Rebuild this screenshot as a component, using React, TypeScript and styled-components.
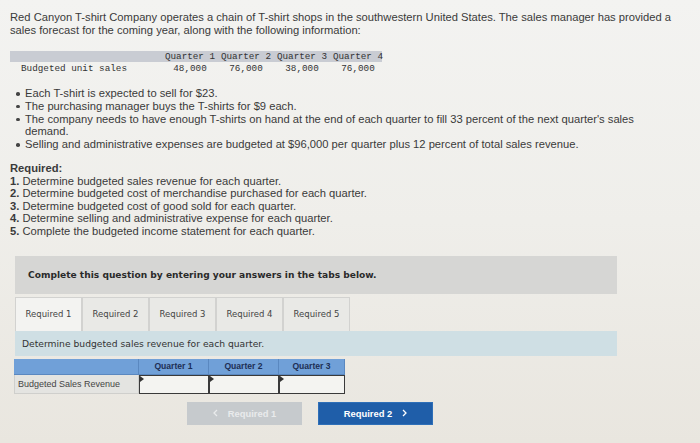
import React from "react";
import styled, { createGlobalStyle } from "styled-components";

const Global = createGlobalStyle`
  html, body { margin: 0; padding: 0; }
  body {
    width: 700px;
    height: 443px;
    overflow: hidden;
    background: linear-gradient(180deg, #f3f3f1 0%, #efeeea 50%, #e9e6df 100%);
    color: #333;
    font-family: "Liberation Sans", Arial, sans-serif;
  }
`;

const Page = styled.div`
  padding: 11px 0 0 10px;
  width: 670px;
`;

const Intro = styled.p`
  margin: 0;
  font-size: 11.2px;
  line-height: 13px;
  color: #3a3a3a;
`;

const DataTable = styled.div`
  margin-top: 14px;
  width: 372px;
  font-family: "Liberation Mono", "DejaVu Sans Mono", monospace;
  font-size: 9.3px;
  color: #333;
`;

const DataRow = styled.div<{ $head?: boolean }>`
  display: grid;
  grid-template-columns: 152px repeat(4, 56px);
  height: 11px;
  line-height: 11px;
  background: ${(p) => (p.$head ? "#c9ccd3" : "transparent")};
  margin-bottom: ${(p) => (p.$head ? "1px" : "0")};
`;

const DataLabel = styled.span`
  padding-left: 11px;
`;

const DataCell = styled.span`
  text-align: center;
  white-space: pre;
`;

const Bullets = styled.ul`
  list-style: none;
  margin: 13px 0 0 0;
  padding: 0 0 0 15px;
  font-size: 11.2px;
  line-height: 12.8px;
  color: #3a3a3a;
`;

const Bullet = styled.li`
  position: relative;
  &::before {
    content: "";
    position: absolute;
    left: -9px;
    top: 5px;
    width: 3.5px;
    height: 3.5px;
    border-radius: 50%;
    background: #444;
  }
`;

const RequiredBlock = styled.div`
  margin-top: 11px;
  font-size: 11.2px;
  line-height: 12.6px;
  color: #3a3a3a;
`;

const Heading = styled.div`
  font-weight: bold;
`;

const Num = styled.b`
  font-weight: bold;
`;

const Instruct = styled.div`
  margin: 18px 0 0 5px;
  width: 602px;
  height: 38px;
  background: #d6d6d4;
  display: flex;
  align-items: center;
  padding-left: 13px;
  box-sizing: border-box;
  font-family: "DejaVu Sans", Verdana, sans-serif;
  font-weight: bold;
  font-size: 9.1px;
  color: #2a2a2a;
`;

const Tabs = styled.div`
  margin: 3px 0 0 5px;
  display: flex;
  height: 34px;
`;

const Tab = styled.div<{ $active?: boolean }>`
  width: 67px;
  box-sizing: border-box;
  border: 1px solid #d2d2d0;
  border-bottom: none;
  background: ${(p) => (p.$active ? "#f3f3f1" : "#e9e9e6")};
  display: flex;
  align-items: center;
  justify-content: center;
  font-family: "DejaVu Sans", Verdana, sans-serif;
  font-size: 8.5px;
  color: #444;
  padding-bottom: 1px;
`;

const Panel = styled.div`
  margin-left: 5px;
  width: 602px;
  height: 25px;
  background: #cfdfe4;
  display: flex;
  align-items: center;
  padding-left: 7px;
  box-sizing: border-box;
  font-family: "DejaVu Sans", Verdana, sans-serif;
  font-size: 9.2px;
  color: #333;
`;

const AnswerTable = styled.div`
  margin: 3px 0 0 4px;
  width: 331px;
  display: grid;
  grid-template-columns: 125px 70px 70px 66px;
  grid-template-rows: 16px 19px;
  font-family: "Liberation Sans", Arial, sans-serif;
`;

const HeadCell = styled.div`
  background: #70a0d8;
  border-right: 1px solid #5a88c0;
  border-bottom: 1px solid #5a88c0;
  display: flex;
  align-items: center;
  justify-content: center;
  font-size: 8.6px;
  font-weight: bold;
  color: #1d2f55;
`;

const RowLabel = styled.div`
  background: #e4e4e1;
  border: 1px solid #cfcfcc;
  border-top: none;
  display: flex;
  align-items: center;
  padding-left: 3px;
  font-size: 9px;
  color: #444;
`;

const InputCell = styled.div`
  position: relative;
  background: #f4f4f1;
  border: 1px solid #3a3a3a;
  &::before {
    content: "";
    position: absolute;
    left: 0;
    top: 0;
    border-top: 3px solid transparent;
    border-bottom: 3px solid transparent;
    border-left: 4px solid #333;
  }
`;

const Buttons = styled.div`
  margin: 8px 0 0 177px;
  display: flex;
  gap: 16px;
`;

const NavButton = styled.div<{ $primary?: boolean }>`
  width: 115px;
  height: 23px;
  box-sizing: border-box;
  display: flex;
  align-items: center;
  justify-content: center;
  gap: 10px;
  font-family: "Liberation Sans", Arial, sans-serif;
  font-weight: bold;
  font-size: 9.4px;
  background: ${(p) => (p.$primary ? "#1f5ea9" : "#c6cacd")};
  color: ${(p) => (p.$primary ? "#ffffff" : "#e9ebec")};
  border: 1px solid ${(p) => (p.$primary ? "#2e6fb8" : "#c6cacd")};
`;

const Chevron = ({ dir }: { dir: "left" | "right" }) => (
  <svg width="5" height="8" viewBox="0 0 5 8" fill="none">
    <path
      d={dir === "left" ? "M4 1 L1 4 L4 7" : "M1 1 L4 4 L1 7"}
      stroke="currentColor"
      strokeWidth="1.3"
    />
  </svg>
);

export default function App() {
  return (
    <>
      <Global />
      <Page>
        <Intro>
          Red Canyon T-shirt Company operates a chain of T-shirt shops in the southwestern United States. The sales
          manager has provided a sales forecast for the coming year, along with the following information:
        </Intro>
        <DataTable>
          <DataRow $head>
            <span />
            <DataCell>Quarter 1</DataCell>
            <DataCell>Quarter 2</DataCell>
            <DataCell>Quarter 3</DataCell>
            <DataCell>Quarter 4</DataCell>
          </DataRow>
          <DataRow>
            <DataLabel>Budgeted unit sales</DataLabel>
            <DataCell>48,000</DataCell>
            <DataCell>76,000</DataCell>
            <DataCell>38,000</DataCell>
            <DataCell>76,000</DataCell>
          </DataRow>
        </DataTable>
        <Bullets>
          <Bullet>Each T-shirt is expected to sell for $23.</Bullet>
          <Bullet>The purchasing manager buys the T-shirts for $9 each.</Bullet>
          <Bullet>
            The company needs to have enough T-shirts on hand at the end of each quarter to fill 33 percent of the next
            quarter's sales demand.
          </Bullet>
          <Bullet>
            Selling and administrative expenses are budgeted at $96,000 per quarter plus 12 percent of total sales
            revenue.
          </Bullet>
        </Bullets>
        <RequiredBlock>
          <Heading>Required:</Heading>
          <div><Num>1.</Num> Determine budgeted sales revenue for each quarter.</div>
          <div><Num>2.</Num> Determine budgeted cost of merchandise purchased for each quarter.</div>
          <div><Num>3.</Num> Determine budgeted cost of good sold for each quarter.</div>
          <div><Num>4.</Num> Determine selling and administrative expense for each quarter.</div>
          <div><Num>5.</Num> Complete the budgeted income statement for each quarter.</div>
        </RequiredBlock>
        <Instruct>Complete this question by entering your answers in the tabs below.</Instruct>
        <Tabs>
          <Tab $active>Required 1</Tab>
          <Tab>Required 2</Tab>
          <Tab>Required 3</Tab>
          <Tab>Required 4</Tab>
          <Tab>Required 5</Tab>
        </Tabs>
        <Panel>Determine budgeted sales revenue for each quarter.</Panel>
        <AnswerTable>
          <HeadCell />
          <HeadCell>Quarter 1</HeadCell>
          <HeadCell>Quarter 2</HeadCell>
          <HeadCell>Quarter 3</HeadCell>
          <RowLabel>Budgeted Sales Revenue</RowLabel>
          <InputCell />
          <InputCell />
          <InputCell />
        </AnswerTable>
        <Buttons>
          <NavButton><Chevron dir="left" />Required 1</NavButton>
          <NavButton $primary>Required 2<Chevron dir="right" /></NavButton>
        </Buttons>
      </Page>
    </>
  );
}
